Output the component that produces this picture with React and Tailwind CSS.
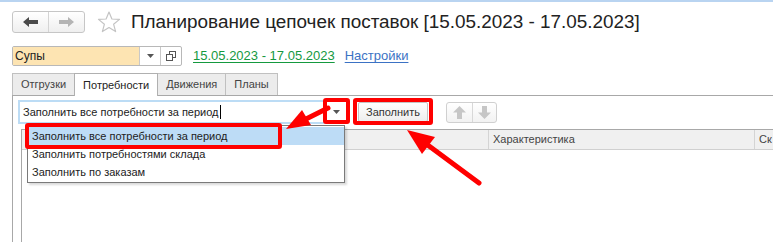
import React from 'react';

const BackIcon = ({ color }) => (
  <svg width="15" height="10" viewBox="0 0 15 10">
    <path d="M0 5 L6 0 L6 3 L15 3 L15 7 L6 7 L6 10 Z" fill={color} />
  </svg>
);

const ForwardIcon = ({ color }) => (
  <svg width="15" height="10" viewBox="0 0 15 10">
    <path d="M15 5 L9 0 L9 3 L0 3 L0 7 L9 7 L9 10 Z" fill={color} />
  </svg>
);

const Star = () => (
  <svg width="24" height="22" viewBox="0 0 24 22">
    <path
      d="M12 1 L14.9 8 L22.5 8.4 L16.6 13.2 L18.6 20.6 L12 16.5 L5.4 20.6 L7.4 13.2 L1.5 8.4 L9.1 8 Z"
      fill="none"
      stroke="#c4c4c4"
      strokeWidth="1.2"
      strokeLinejoin="round"
    />
  </svg>
);

const Caret = () => (
  <svg width="7" height="4" viewBox="0 0 7 4">
    <path d="M0 0 L7 0 L3.5 4 Z" fill="#555" />
  </svg>
);

const OpenIcon = () => (
  <svg width="10" height="10" viewBox="0 0 10 10">
    <rect x="3.5" y="0.5" width="6" height="6" fill="none" stroke="#555" />
    <rect x="0.5" y="3.5" width="6" height="6" fill="white" stroke="#555" />
  </svg>
);

const UpIcon = () => (
  <svg width="13" height="13" viewBox="0 0 13 13">
    <path d="M6.5 0 L13 6.5 L9 6.5 L9 13 L4 13 L4 6.5 L0 6.5 Z" fill="#c6c6c6" />
  </svg>
);

const DownIcon = () => (
  <svg width="13" height="13" viewBox="0 0 13 13">
    <path d="M6.5 13 L13 6.5 L9 6.5 L9 0 L4 0 L4 6.5 L0 6.5 Z" fill="#c6c6c6" />
  </svg>
);

const tabs = ['Отгрузки', 'Потребности', 'Движения', 'Планы'];
const fillOptions = [
  'Заполнить все потребности за период',
  'Заполнить потребностями склада',
  'Заполнить по заказам',
];

export default function App() {
  return (
    <div className="relative w-[773px] h-[242px] overflow-hidden bg-white font-['Liberation_Sans',Arial,sans-serif] text-[#333]">
      <div className="h-[2px] bg-[#b9d4f1]" />

      {/* Заголовок формы */}
      <div className="flex items-center h-[22px] mt-[9px] pl-[12px]">
        <div className="flex h-[22px] w-[73px] rounded-[3px] border border-[#c6c6c6] bg-gradient-to-b from-white to-[#efefef]">
          <div className="flex w-[36px] items-center justify-center border-r border-[#d4d4d4]">
            <BackIcon color="#4a4a4a" />
          </div>
          <div className="flex flex-1 items-center justify-center">
            <ForwardIcon color="#b4b4b4" />
          </div>
        </div>
        <div className="ml-[12px] flex items-center">
          <Star />
        </div>
        <h1 className="ml-[10px] text-[18.9px] leading-none text-[#222] whitespace-nowrap">
          Планирование цепочек поставок [15.05.2023 - 17.05.2023]
        </h1>
      </div>

      {/* Отбор и период */}
      <div className="flex items-center h-[20px] mt-[13px] pl-[12px]">
        <div className="flex h-[20px] w-[170px] rounded-[2px] border border-[#b8b8b8]">
          <div className="flex flex-1 items-center bg-[#fde4b2] pl-[2px] text-[12px] text-[#222]">Супы</div>
          <div className="flex w-[21px] items-center justify-center border-l border-[#c8c8c8]">
            <Caret />
          </div>
          <div className="flex w-[21px] items-center justify-center border-l border-[#c8c8c8]">
            <OpenIcon />
          </div>
        </div>
        <a className="ml-[11px] text-[13px] text-[#15993f] underline underline-offset-2">
          15.05.2023 - 17.05.2023
        </a>
        <a className="ml-[10px] text-[13px] text-[#3b72c4] underline underline-offset-2">
          Настройки
        </a>
      </div>

      {/* Закладки */}
      <div className="flex h-[22px] mt-[7px] pl-[12px] text-[11px]">
        {tabs.map((t, i) =>
          i === 1 ? (
            <div
              key={t}
              className="relative z-10 flex items-center px-[8px] h-[23px] border border-b-0 border-[#b0b0b0] bg-white text-[#222] -ml-px"
            >
              {t}
            </div>
          ) : (
            <div
              key={t}
              className={`flex items-center px-[8px] h-[22px] border border-b-0 border-[#c0c0c0] bg-[#ececec] text-[#444] ${i > 0 ? '-ml-px' : ''}`}
            >
              {t}
            </div>
          )
        )}
      </div>

      {/* Панель закладки */}
      <div className="ml-[12px] h-[160px] border-t border-l border-[#a8a8a8] pl-[5px] pt-[4px]">
        <div className="flex items-center h-[24px]">
          <div className="flex h-[24px] w-[330px] border-2 border-[#bcdcf5] bg-white">
            <div className="flex flex-1 items-center pl-[3px] text-[11px] text-[#222]">
              Заполнить все потребности за период<span className="ml-px h-[14px] w-px bg-black" />
            </div>
            <div className="flex w-[20px] items-center justify-center">
              <Caret />
            </div>
          </div>
          <div className="ml-[10px] flex h-[20px] w-[70px] items-center justify-center rounded-[2px] border border-[#c4c4c4] bg-gradient-to-b from-white to-[#eeeeee] text-[11px] text-[#333]">
            Заполнить
          </div>
          <div className="ml-[18px] flex h-[21px] w-[51px] rounded-[3px] border border-[#d0d0d0] bg-gradient-to-b from-white to-[#f2f2f2]">
            <div className="flex w-[26px] items-center justify-center border-r border-[#d8d8d8]">
              <UpIcon />
            </div>
            <div className="flex flex-1 items-center justify-center">
              <DownIcon />
            </div>
          </div>
        </div>

        {/* Табличная часть */}
        <div className="ml-[3px] mt-[5px] h-[120px] border-l border-t border-[#a8a8a8]">
          <div className="flex h-[20px] bg-[#f0f0f0] border-b border-[#d0d0d0] text-[11px] text-[#444]">
            <div className="w-[467px] border-r border-[#d4d4d4]" />
            <div className="flex w-[266px] items-center pl-[4px] border-r border-[#d4d4d4]">Характеристика</div>
            <div className="flex flex-1 items-center pl-[4px]">Ск</div>
          </div>
        </div>
      </div>

      {/* Выпадающий список */}
      <div className="absolute left-[27px] top-[125px] w-[318px] border border-[#7a7a7a] bg-white py-[1px] text-[11px] text-[#222] shadow-[2px_2px_2px_rgba(0,0,0,0.15)]">
        {fillOptions.map((o, i) => (
          <div key={o} className={`flex h-[18px] items-center pl-[4px] ${i === 0 ? 'bg-[#bddcf6]' : ''}`}>
            {o}
          </div>
        ))}
      </div>

      {/* Пометки */}
      <div className="absolute left-[323px] top-[98px] h-[26px] w-[27px] rounded-[3px] border-4 border-[#ff0000]" />
      <div className="absolute left-[353px] top-[98px] h-[27px] w-[80px] rounded-[3px] border-4 border-[#ff0000]" />
      <div className="absolute left-[25px] top-[123px] h-[26px] w-[257px] rounded-[3px] border-4 border-[#ff0000]" />

      <svg className="absolute left-0 top-0" width="773" height="242" viewBox="0 0 773 242">
        <line x1="328" y1="108" x2="302" y2="121" stroke="#ff0000" strokeWidth="5" strokeLinecap="round" />
        <polygon points="286,129 311,125 302,110" fill="#ff0000" />
        <line x1="479" y1="183" x2="425" y2="143" stroke="#ff0000" strokeWidth="5" strokeLinecap="round" />
        <polygon points="407,130 435,137 422,154" fill="#ff0000" />
      </svg>
    </div>
  );
}
